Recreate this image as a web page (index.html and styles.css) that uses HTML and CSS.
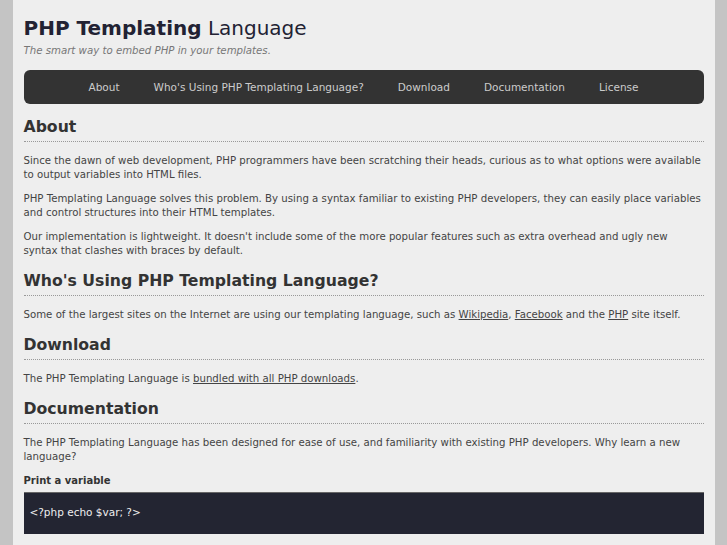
FILE: index.html
```html
<!DOCTYPE html>
<html lang="en">
<head>
    <meta charset="UTF-8">
    <meta name="viewport" content="width=device-width, initial-scale=1.0">
    <title>PHP Templating Language</title>
    <link rel="stylesheet" href="styles.css">
</head>
<body>
    <div class="wrapper">
        <div class="header">
            <h1><strong>PHP Templating</strong> Language</h1>
            <p class="tagline">The smart way to embed PHP in your templates.</p>
        </div>

        <ul class="nav">
            <li><a href="#about">About</a></li>
            <li><a href="#using">Who's Using PHP Templating Language?</a></li>
            <li><a href="#download">Download</a></li>
            <li><a href="#docs">Documentation</a></li>
            <li><a href="#license">License</a></li>
        </ul>

        <h2 id="about">About</h2>
        <p>Since the dawn of web development, PHP programmers have been scratching their heads, curious as to what options were available to output variables into HTML files.</p>
        <p>PHP Templating Language solves this problem. By using a syntax familiar to existing PHP developers, they can easily place variables and control structures into their HTML templates.</p>
        <p>Our implementation is lightweight. It doesn't include some of the more popular features such as extra overhead and ugly new syntax that clashes with braces by default.</p>

        <h2 id="using">Who's Using PHP Templating Language?</h2>
        <p>Some of the largest sites on the Internet are using our templating language, such as <a href="#">Wikipedia</a>, <a href="#">Facebook</a> and the <a href="#">PHP</a> site itself.</p>

        <h2 id="download">Download</h2>
        <p>The PHP Templating Language is <a href="#">bundled with all PHP downloads</a>.</p>

        <h2 id="docs">Documentation</h2>
        <p>The PHP Templating Language has been designed for ease of use, and familiarity with existing PHP developers. Why learn a new language?</p>

        <h3>Print a variable</h3>
        <pre class="code">&lt;?php echo $var; ?&gt;</pre>
    </div>
</body>
</html>
```

FILE: styles.css
```css
html {
    background-color: #c4c4c4;
}

body {
    margin: 0;
    font-family: "DejaVu Sans", Verdana, sans-serif;
    font-size: 10.2px;
    line-height: 14px;
    color: #444;
}

.wrapper {
    width: 680px;
    margin: 0 auto;
    padding: 14px 11px 20px;
    background-color: #eee;
}

.header h1 {
    margin: 0;
    font-size: 20px;
    line-height: 28px;
    font-weight: normal;
    color: #222233;
}

.header h1 strong {
    font-weight: bold;
}

.tagline {
    margin: 2px 0 0;
    font-style: italic;
    font-size: 10.2px;
    color: #777;
}

.nav {
    display: flex;
    justify-content: center;
    align-items: center;
    height: 34px;
    margin: 12px 0 0;
    padding: 0;
    list-style: none;
    background-color: #333;
    border-radius: 6px;
}

.nav li a {
    display: block;
    padding: 0 17px;
    font-size: 10.5px;
    color: #ccc;
    text-decoration: none;
}

h2 {
    margin: 13px 0 12px;
    padding-bottom: 4px;
    font-size: 15.7px;
    line-height: 20px;
    color: #333;
    border-bottom: 1px dotted #999;
}

p {
    margin: 0 0 10px;
}

p a {
    color: #444;
}

h3 {
    margin: 10px 0 4px;
    font-size: 10px;
    line-height: 14px;
    color: #333;
}

.code {
    margin: 0;
    padding: 12px 6px 15px;
    font-family: "DejaVu Sans", Verdana, sans-serif;
    font-size: 10.5px;
    line-height: 14px;
    color: #eee;
    background-color: #232532;
    border-top: 1px solid #666;
}
```
